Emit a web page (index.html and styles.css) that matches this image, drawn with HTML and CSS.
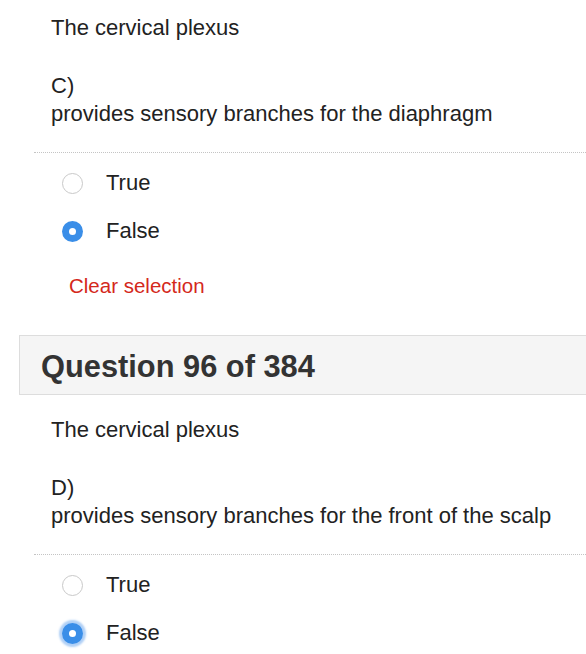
FILE: index.html
```html
<!DOCTYPE html>
<html>
<head>
<meta charset="utf-8">
<link rel="stylesheet" href="styles.css">
</head>
<body>
<div class="page">
  <section class="question first">
    <div class="stem">
      <p class="line">The cervical plexus</p>
      <p class="line choice-letter">C)</p>
      <p class="line choice-text">provides sensory branches for the diaphragm</p>
    </div>
    <div class="rule"></div>
    <ul class="options">
      <li class="option"><span class="radio"></span><span class="label">True</span></li>
      <li class="option"><span class="radio checked"></span><span class="label">False</span></li>
    </ul>
    <a class="clear">Clear selection</a>
  </section>

  <header class="qheader"><h2 class="qtitle">Question 96 of 384</h2></header>

  <section class="question second">
    <div class="stem">
      <p class="line">The cervical plexus</p>
      <p class="line choice-letter">D)</p>
      <p class="line choice-text">provides sensory branches for the front of the scalp</p>
    </div>
    <div class="rule"></div>
    <ul class="options">
      <li class="option"><span class="radio"></span><span class="label">True</span></li>
      <li class="option"><span class="radio checked focused"></span><span class="label">False</span></li>
    </ul>
  </section>
</div>
</body>
</html>
```

FILE: styles.css
```css
html, body {
  margin: 0;
  padding: 0;
  background: #ffffff;
  overflow: hidden;
}
.page {
  font-family: "Liberation Sans", Arial, Helvetica, sans-serif;
  color: #222222;
  width: 586px;
  overflow: hidden;
}
.question.first {
  padding-top: 15px;
}
.question.second {
  padding-top: 22px;
}
.stem {
  padding-left: 51px;
}
.line {
  margin: 0;
  font-size: 22px;
  line-height: 26px;
  white-space: nowrap;
}
.choice-letter {
  margin-top: 32px;
}
.choice-text {
  margin-top: 2px;
}
.rule {
  margin: 25px 0 0 34px;
  border-top: 1px dotted #c4c4c4;
}
.options {
  list-style: none;
  margin: 6px 0 0 0;
  padding: 0 0 0 62px;
}
.option {
  display: flex;
  align-items: center;
  height: 48px;
}
.radio {
  box-sizing: border-box;
  width: 21px;
  height: 21px;
  border-radius: 50%;
  border: 1px solid #c9c9c9;
  background: #ffffff;
  flex: none;
  position: relative;
}
.radio.checked {
  border: none;
  background: #3a8ee8;
}
.radio.checked::after {
  content: "";
  position: absolute;
  left: 7px;
  top: 7px;
  width: 7px;
  height: 7px;
  border-radius: 50%;
  background: #ffffff;
}
.radio.focused {
  box-shadow: 0 0 2px 3px rgba(80, 150, 235, 0.45);
}
.label {
  margin-left: 23px;
  font-size: 22px;
  line-height: 26px;
}
.clear {
  display: block;
  margin: 18px 0 0 69px;
  font-size: 20.5px;
  line-height: 26px;
  color: #d4281b;
}
.qheader {
  box-sizing: border-box;
  margin: 36px -20px 0 19px;
  height: 60px;
  background: #f5f5f5;
  border: 1px solid #dddddd;
  display: flex;
  align-items: center;
  padding: 3px 0 0 21px;
}
.qtitle {
  margin: 0;
  font-size: 30.8px;
  line-height: 36px;
  font-weight: bold;
  color: #333333;
  white-space: nowrap;
}
```
